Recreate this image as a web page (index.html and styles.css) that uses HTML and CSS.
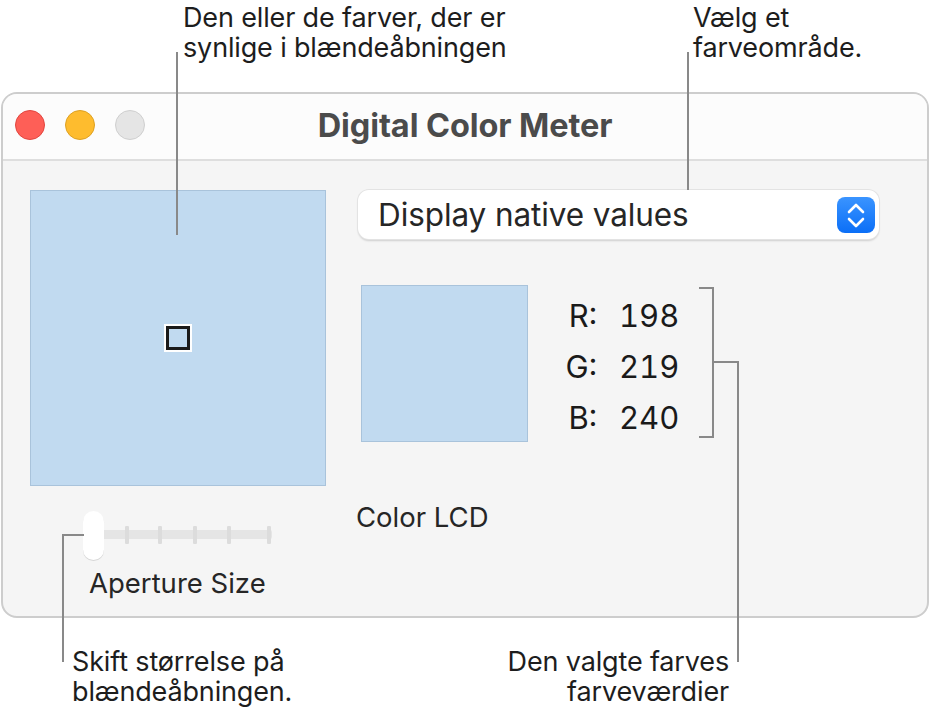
FILE: index.html
```html
<!DOCTYPE html>
<html lang="da">
<head>
    <meta charset="UTF-8">
    <meta name="viewport" content="width=device-width, initial-scale=1.0">
    <title>Digital Color Meter</title>
    <link rel="stylesheet" href="styles.css">
</head>
<body>
    <div class="figure">
        <div class="window">
            <div class="titlebar">
                <div class="lights">
                    <span class="light close"></span>
                    <span class="light minimize"></span>
                    <span class="light zoom"></span>
                </div>
                <div class="title">Digital Color Meter</div>
                <div></div>
            </div>

            <div class="content">
                <div class="left-col">
                    <div class="aperture">
                        <span class="target"></span>
                    </div>
                    <svg class="slider" width="200" height="56" viewBox="0 0 200 56">
                        <rect x="8" y="22" width="184" height="9" rx="2" fill="#e5e5e5"/>
                        <rect x="45" y="18" width="4" height="18" rx="1" fill="#dcdcdc"/>
                        <rect x="78" y="18" width="4" height="18" rx="1" fill="#dcdcdc"/>
                        <rect x="113" y="18" width="4" height="18" rx="1" fill="#dcdcdc"/>
                        <rect x="147" y="18" width="4" height="18" rx="1" fill="#dcdcdc"/>
                        <rect x="187" y="18" width="4" height="18" rx="1" fill="#dcdcdc"/>
                        <rect x="3" y="4" width="21" height="49" rx="10.5" fill="#d6d6d6"/>
                        <rect x="3" y="3" width="21" height="49" rx="10.5" fill="#ffffff"/>
                    </svg>
                    <div class="slider-label">Aperture Size</div>
                </div>

                <div class="right-col">
                    <div class="popup">
                        <span class="popup-text">Display native values</span>
                        <span class="stepper">
                            <svg width="38" height="36" viewBox="0 0 38 36">
                                <polyline points="12,15 19,8 26,15" fill="none" stroke="#fff" stroke-width="2.6" stroke-linecap="round" stroke-linejoin="round"/>
                                <polyline points="12,22 19,29 26,22" fill="none" stroke="#fff" stroke-width="2.6" stroke-linecap="round" stroke-linejoin="round"/>
                            </svg>
                        </span>
                    </div>

                    <div class="readout">
                        <div class="swatch"></div>
                        <div class="values">
                            <span class="channel">R:</span><span class="number">198</span>
                            <span class="channel">G:</span><span class="number">219</span>
                            <span class="channel">B:</span><span class="number">240</span>
                        </div>
                    </div>

                    <div class="display-name">Color LCD</div>
                </div>
            </div>
        </div>

        <!-- Callouts -->
        <div class="callout-text note-aperture">Den eller de farver, der er<br>synlige i blændeåbningen</div>
        <div class="callout-text note-space">Vælg et<br>farveområde.</div>
        <div class="callout-text note-size">Skift størrelse på<br>blændeåbningen.</div>
        <div class="callout-text note-values">Den valgte farves<br>farveværdier</div>

        <div class="line line-aperture"></div>
        <div class="line line-space"></div>
        <div class="line bracket"></div>
        <div class="line line-values"></div>
        <div class="line line-size"></div>
    </div>
</body>
</html>
```

FILE: styles.css
```css
/* Basic Reset */
* {
    margin: 0;
    padding: 0;
    box-sizing: border-box;
}

body {
    background-color: #ffffff;
    font-family: "Inter", "Liberation Sans", sans-serif;
    color: #262626;
}

/* Figure canvas */
.figure {
    position: relative;
    width: 931px;
    height: 718px;
    padding-top: 92px;
    padding-left: 1px;
}

/* Window */
.window {
    width: 928px;
    height: 526px;
    border: 2px solid #cdcdcd;
    border-radius: 16px;
    overflow: hidden;
    background-color: #f5f5f5;
    display: flex;
    flex-direction: column;
}

.titlebar {
    height: 67px;
    background-color: #fcfcfc;
    border-bottom: 2px solid #dedede;
    display: grid;
    grid-template-columns: 1fr auto 1fr;
    align-items: center;
}

.lights {
    display: flex;
    gap: 20px;
    padding-left: 12px;
    margin-top: -3px;
}

.light {
    width: 30px;
    height: 30px;
    border-radius: 50%;
}

.light.close {
    background-color: #fe5f57;
    border: 1px solid #e2463f;
}

.light.minimize {
    background-color: #febc2e;
    border: 1px solid #dea123;
}

.light.zoom {
    background-color: #e5e5e5;
    border: 1px solid #cfcfcf;
}

.title {
    font-weight: 700;
    font-size: 32.5px;
    color: #4b4b4b;
    letter-spacing: -0.1px;
    margin-top: -3px;
}

/* Content area */
.content {
    flex: 1;
    display: flex;
    gap: 32px;
    padding: 29px 0 0 27px;
}

.left-col {
    width: 296px;
    display: flex;
    flex-direction: column;
}

.aperture {
    width: 296px;
    height: 296px;
    background-color: #c1daf0;
    border: 1px solid #a9c3db;
    display: flex;
    align-items: center;
    justify-content: center;
}

.target {
    width: 28px;
    height: 28px;
    border: 2px solid #ffffff;
    outline: 3px solid #1a1a1a;
    outline-offset: -5px;
}

.slider {
    display: block;
    margin: 22px 0 0 50px;
}

.slider-label {
    margin-left: 59px;
    margin-top: 3px;
    font-size: 27.5px;
    line-height: 32px;
}

.right-col {
    width: 521px;
    display: flex;
    flex-direction: column;
}

/* Popup button */
.popup {
    height: 49px;
    background-color: #ffffff;
    border-radius: 11px;
    box-shadow: 0 0 0 1px #e3e3e3, 0 2px 2px rgba(0, 0, 0, 0.16);
    display: flex;
    align-items: center;
    justify-content: space-between;
    padding: 0 4px 0 20px;
}

.popup-text {
    font-size: 31.5px;
    letter-spacing: -0.1px;
}

.stepper {
    width: 38px;
    height: 36px;
    border-radius: 8px;
    background: linear-gradient(#3a94ff, #0b6ff7);
    display: flex;
}

/* Color readout */
.readout {
    display: flex;
    margin-top: 46px;
    padding-left: 3px;
}

.swatch {
    width: 167px;
    height: 157px;
    background-color: #c1daf0;
    border: 1px solid #a9c3db;
}

.values {
    display: grid;
    grid-template-columns: 52px auto;
    column-gap: 22px;
    margin-left: 17px;
    margin-top: 5px;
    font-size: 31px;
    line-height: 51px;
    font-variant-numeric: tabular-nums;
    color: #1a1a1a;
}

.channel {
    text-align: right;
}

.display-name {
    margin-top: 58px;
    margin-left: -2px;
    font-size: 27.5px;
    line-height: 32px;
}

/* Callouts */
.callout-text {
    position: absolute;
    font-family: "Inter", "Liberation Sans", sans-serif;
    font-size: 27px;
    line-height: 30px;
    letter-spacing: -0.15px;
    color: #1d1d1d;
}

.note-aperture {
    left: 183px;
    top: 3px;
}

.note-space {
    left: 693px;
    top: 3px;
}

.note-size {
    left: 72px;
    top: 647px;
}

.note-values {
    right: 202px;
    top: 647px;
    text-align: right;
}

.line {
    position: absolute;
    border: 0 solid #898989;
}

.line-aperture {
    left: 176px;
    top: 52px;
    height: 183px;
    border-left-width: 2px;
}

.line-space {
    left: 687px;
    top: 52px;
    height: 138px;
    border-left-width: 2px;
}

.bracket {
    left: 699px;
    top: 287px;
    width: 15px;
    height: 151px;
    border-width: 2px 2px 2px 0;
}

.line-values {
    left: 712px;
    top: 361px;
    width: 27px;
    height: 301px;
    border-width: 2px 2px 0 0;
}

.line-size {
    left: 62px;
    top: 534px;
    width: 22px;
    height: 128px;
    border-width: 2px 0 0 2px;
}
```
